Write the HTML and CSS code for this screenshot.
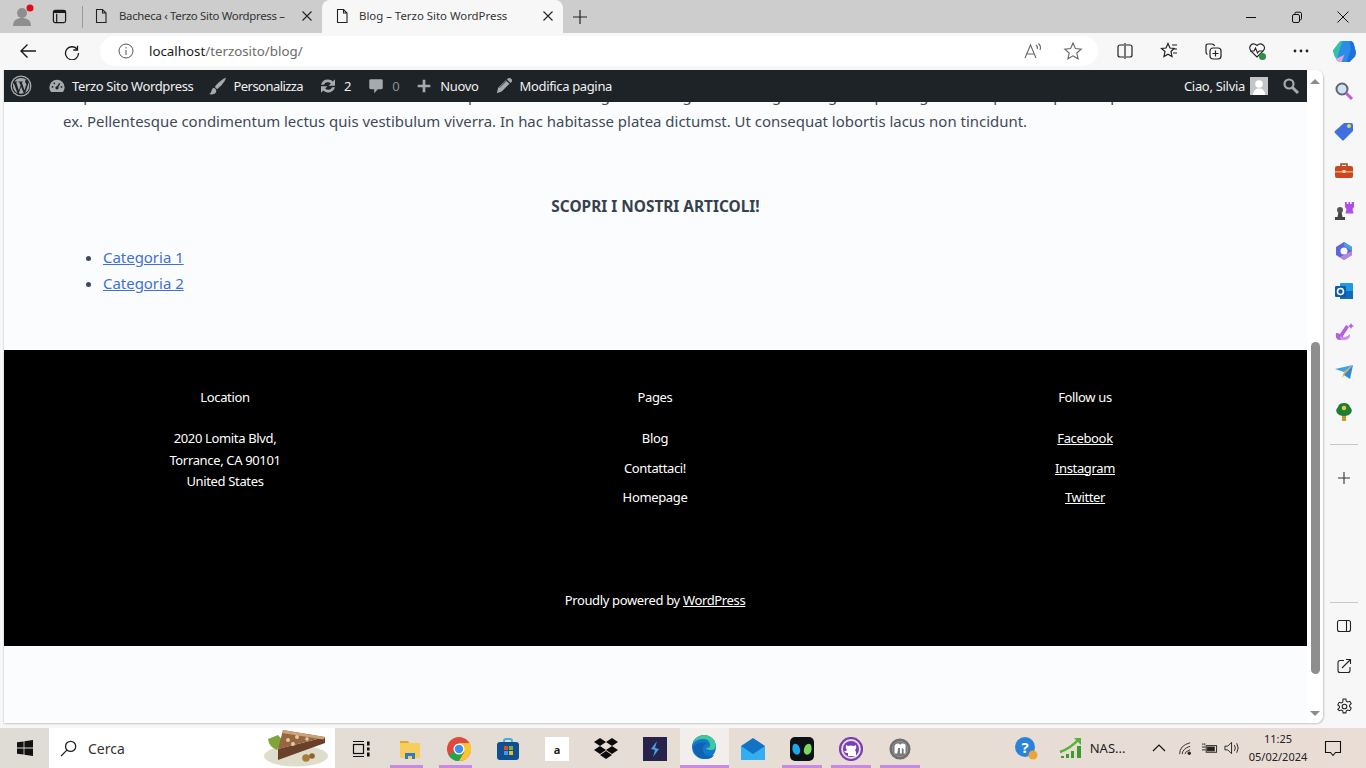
FILE: index.html
```html
<!DOCTYPE html>
<html lang="it">
<head>
  <meta charset="UTF-8">
  <meta name="viewport" content="width=device-width, initial-scale=1.0">
  <title>Blog – Terzo Sito WordPress</title>
  <link rel="stylesheet" href="styles.css">
</head>

<body>
  <div class="window">

    <!-- Tab strip -->
    <header class="tabstrip">
      <div class="profile">
        <svg viewBox="0 0 24 24" width="24" height="24"><circle cx="11" cy="9" r="5" fill="#8e8e8e"/><path d="M2 22c0-6 4-8 9-8s9 2 9 8z" fill="#8e8e8e"/><circle cx="19" cy="4" r="3.5" fill="#e00b1c"/></svg>
      </div>
      <div class="tab-actions">
        <svg viewBox="0 0 16 16" width="15" height="15" fill="none" stroke="#1a1a1a" stroke-width="1.3"><rect x="1.5" y="1.5" width="13" height="13" rx="2"/><path d="M5 5v9.5"/><path d="M1.5 3h13" stroke-width="2.6"/></svg>
      </div>
      <div class="tab-sep"></div>
      <div class="tab">
        <svg class="tab-icon" viewBox="0 0 16 16" width="16" height="16" fill="none" stroke="#222" stroke-width="1.1"><path d="M3.5 1.5h6l3.5 3.5v9.5h-9.5zM9.5 1.5V5H13"/></svg>
        <span class="tab-title">Bacheca ‹ Terzo Sito Wordpress –</span>
        <svg class="tab-close" viewBox="0 0 10 10" width="10" height="10" stroke="#222" stroke-width="1.1"><path d="M.5.5l9 9M9.500.5l-9 9"/></svg>
      </div>
      <div class="tab active">
        <svg class="tab-icon" viewBox="0 0 16 16" width="16" height="16" fill="none" stroke="#222" stroke-width="1.1"><path d="M3.5 1.5h6l3.5 3.5v9.5h-9.5zM9.5 1.5V5H13"/></svg>
        <span class="tab-title">Blog – Terzo Sito WordPress</span>
        <svg class="tab-close" viewBox="0 0 10 10" width="10" height="10" stroke="#222" stroke-width="1.1"><path d="M.5.5l9 9M9.500.5l-9 9"/></svg>
      </div>
      <div class="new-tab">
        <svg viewBox="0 0 16 16" width="16" height="16" stroke="#222" stroke-width="1.2"><path d="M8 1v14M1 8h14"/></svg>
      </div>
      <div class="win-controls">
        <svg viewBox="0 0 12 12" width="12" height="12" stroke="#111" fill="none"><path d="M1 6.5h10"/></svg>
        <svg viewBox="0 0 12 12" width="12" height="12" stroke="#111" fill="none"><rect x="1.5" y="3.5" width="7" height="8" rx="1.5"/><path d="M4 3.5V2.2q0-1 1-1h4q1.5 0 1.5 1.5v5q0 1-1 1H8.500"/></svg>
        <svg viewBox="0 0 12 12" width="12" height="12" stroke="#111" fill="none"><path d="M.5.5l11 11M11.500.5l-11 11"/></svg>
      </div>
    </header>

    <!-- Address bar and browser buttons -->
    <div class="toolbar">
      <button class="tool back"><svg viewBox="0 0 18 18" width="18" height="18" fill="none" stroke="#1a1a1a" stroke-width="1.4"><path d="M17 9H2M8.500 2.500L2 9l6.500 6.500"/></svg></button>
      <button class="tool reload"><svg viewBox="0 0 18 18" width="18" height="18" fill="none" stroke="#1a1a1a" stroke-width="1.3"><path d="M14.500 3.800V8h-4.200"/><path d="M14.300 7.500A6.500 6.500 0 1 0 15.500 11"/></svg></button>
      <div class="address">
        <svg viewBox="0 0 16 16" width="16" height="16" fill="none" stroke="#555"><circle cx="8" cy="8" r="7"/><path d="M8 7v5M8 4v1.500"/></svg>
        <span class="url"><b>localhost</b>/terzosito/blog/</span>
        <span class="address-end">
          <svg viewBox="0 0 20 18" width="20" height="18" fill="none" stroke="#666" stroke-width="1.100"><path d="M2 16L7.500 3 13 16M4 12h7"/><path d="M13 3q2 1.500 1.200 4M15.500 1.500q3 3 1.500 6.500"/></svg>
          <svg viewBox="0 0 20 20" width="20" height="20" fill="none" stroke="#666" stroke-width="1.100"><path d="M10 2l2.400 5.500 5.800.6-4.400 3.900 1.300 5.800L10 14.800 4.900 17.800l1.300-5.800L1.800 8.100l5.800-.6z"/></svg>
        </span>
      </div>
      <div class="tool-group">
        <svg viewBox="0 0 18 18" width="18" height="18" fill="none" stroke="#222" stroke-width="1.200"><path d="M8 3H4a2 2 0 0 0-2 2v8a2 2 0 0 0 2 2h4M10 3h4a2 2 0 0 1 2 2v8a2 2 0 0 1-2 2h-4M9 1v16"/></svg>
        <svg viewBox="0 0 18 18" width="18" height="18" fill="none" stroke="#222" stroke-width="1.200"><path d="M8 1.500l2 4.500 4 .5-3 3 1 5-4-2.300L4 14.500l1-5-3.500-3 4.500-.5zM12 3h5M13.500 7H17M13 11h4"/></svg>
        <svg viewBox="0 0 18 18" width="18" height="18" fill="none" stroke="#222" stroke-width="1.200"><rect x="6" y="6" width="11" height="11" rx="3"/><path d="M11.500 8.500v6M8.500 11.500h6M3.500 12.500Q2 12 2 10V4q0-2 2-2h4q2 0 2.500 2"/></svg>
        <svg viewBox="0 0 18 18" width="18" height="18" fill="none" stroke="#222" stroke-width="1.100"><path d="M9 15L2.800 8.800Q.5 5.500 3 3t6 .5q3-3 6-.5t.2 5.800L9 15"/><path d="M2 9h4l1.500-3 2 5 1.500-2h4"/><circle cx="14.500" cy="14.500" r="3.500" fill="#2f8f46" stroke="none"/></svg>
        <svg viewBox="0 0 18 18" width="18" height="18" fill="#222"><circle cx="3" cy="9" r="1.400"/><circle cx="9" cy="9" r="1.400"/><circle cx="15" cy="9" r="1.400"/></svg>
      </div>
      <div class="copilot">
        <svg viewBox="0 0 24 24" width="25" height="25"><path d="M9 2h8q3 0 4 3l2 8-6 9H8q-3 0-4-3L1 11z" fill="#2a8ee8"/><path d="M1 11l5-7q1-2 4-2l-3 9-2 8q-3-1-4-8z" fill="#35c1a6"/><path d="M17 2q3 0 4 3l2 8q0 4-3 6l-3 3h-3l4-12z" fill="#1f6fe0"/><path d="M8 22q-3 0-4-3l8-4-3 7z" fill="#e6a4e8"/></svg>
      </div>
    </div>

    <div class="browser-body">
      <div class="viewport">
        <div class="page">
          <!-- WordPress admin bar -->
          <nav class="adminbar">
            <div class="ab-left">
              <svg class="ab-wp" viewBox="0 0 20 20" width="22" height="22"><circle cx="10" cy="10" r="9.500" fill="#a7aaad"/><circle cx="10" cy="10" r="8.300" fill="#1d2327"/><path d="M2.700 10c0 2.900 1.700 5.400 4.100 6.600L3.300 7A7.300 7.300 0 0 0 2.700 10zM15 9.600c0-.9-.3-1.500-.6-2-.4-.6-.7-1.100-.7-1.700 0-.7.500-1.300 1.200-1.300h.1A7.300 7.300 0 0 0 4 6h.5c.8 0 1.900-.1 1.900-.1.400 0 .5.600 0 .6 0 0-.4.100-.8.100l2.500 7.500 1.500-4.600-1.100-2.900-.7-.1c-.4 0-.3-.6 0-.6 0 0 1.100.1 1.800.1s1.900-.1 1.900-.1c.4 0 .4.600 0 .6 0 0-.4.100-.8.100l2.500 7.400.7-2.300c.3-.9.500-1.600.5-2.100zM10.100 10.700l-2.100 6a7.300 7.300 0 0 0 4.500-.1zM16.500 6.400c0 .3.100.6.100.9 0 .7-.2 1.600-.6 2.700l-2.200 6.400A7.300 7.300 0 0 0 16.500 6.400z" fill="#a7aaad"/></svg>
              <span class="ab-item first">
                <svg viewBox="0 0 20 20" width="18" height="18" fill="#a7aaad"><path d="M10 3a8.500 8.500 0 0 0-8.500 8.500c0 2 .7 3.900 2 5.300h13c1.300-1.400 2-3.300 2-5.300A8.500 8.500 0 0 0 10 3z"/><path d="M10 12l3-5" stroke="#1d2327" stroke-width="1.600"/><circle cx="10" cy="12" r="1.800" fill="#1d2327"/><circle cx="5" cy="11" r="1" fill="#1d2327"/><circle cx="7" cy="7" r="1" fill="#1d2327"/><circle cx="15" cy="11" r="1" fill="#1d2327"/></svg>
                Terzo Sito Wordpress
              </span>
              <span class="ab-item tight">
                <svg viewBox="0 0 20 20" width="18" height="18" fill="#a7aaad"><path d="M19 .5C15 2 9 7 6.500 11l2.500 2.500C13 10.500 18 5 19 .5zM5.500 12C3 12.500 3 15 2.500 16.500 2 18 1 18.500 0 19c3 1 7 .5 8-2.500.4-1.500-.5-3.500-2.500-4.500z"/></svg>
                Personalizza
              </span>
              <span class="ab-item">
                <svg viewBox="0 0 20 20" width="18" height="18" fill="#a7aaad"><path d="M10.200 2.800c2 0 3.800.8 5.100 2.100L17.800 2.500v7.200h-7.200l2.500-2.500a4.600 4.600 0 0 0-7.600 1.400H2.300a7.900 7.900 0 0 1 7.900-5.800zM2.200 10.300h7.200l-2.500 2.500a4.600 4.600 0 0 0 7.600-1.400h3.200a7.900 7.900 0 0 1-13 3.700L2.200 17.500z"/></svg>
                2
              </span>
              <span class="ab-item dim">
                <svg viewBox="0 0 20 20" width="18" height="18" fill="#a7aaad"><path d="M4 2.500h12q1.500 0 1.500 1.500v8q0 1.500-1.500 1.500h-4l-4 4.500v-4.500H4q-1.500 0-1.500-1.500V4q0-1.500 1.500-1.500z"/></svg>
                0
              </span>
              <span class="ab-item">
                <svg viewBox="0 0 20 20" width="18" height="18" fill="#a7aaad"><path d="M8.500 3h3v5.500H17v3h-5.500V17h-3v-5.500H3v-3h5.500z"/></svg>
                Nuovo
              </span>
              <span class="ab-item">
                <svg viewBox="0 0 20 20" width="18" height="18" fill="#a7aaad"><path d="M14.500 1.500q2-1 3.500.5t.5 3.500l-1.200 1.200-4-4zM12 3.500l4 4L7.500 16 2 18l1.500-6z"/><path d="M5 12l8-8" stroke="#1d2327" stroke-width=".8"/></svg>
                Modifica pagina
              </span>
            </div>
            <div class="ab-right">
              <span class="ab-greet">Ciao, Silvia</span>
              <svg class="ab-avatar" viewBox="0 0 18 18" width="18" height="18"><rect width="18" height="18" fill="#c5c5c5"/><circle cx="9" cy="7" r="3.800" fill="#fff"/><path d="M3 18c0-5 3-6.500 6-6.500s6 1.500 6 6.500z" fill="#fff"/></svg>
              <svg class="ab-search" viewBox="0 0 18 18" width="18" height="18" fill="none" stroke="#a7aaad"><circle cx="7" cy="7" r="4.500" stroke-width="2.200"/><path d="M10.500 10.500L16 16" stroke-width="3"/></svg>
            </div>
          </nav>

          <div class="scroller">
            <main class="content">
              <p class="intro">Ut pharetra sed ante lectus non hendrerit ante in nulla ac pulvinar lorem ut ligula nunc eget tortor augue in eget ac purus gravida et pretium purus a pede. Sed<br>ex. Pellentesque condimentum lectus quis vestibulum viverra. In hac habitasse platea dictumst. Ut consequat lobortis lacus non tincidunt.</p>
              <h2 class="section-title">SCOPRI I NOSTRI ARTICOLI!</h2>
              <ul class="cat-list">
                <li><a href="#">Categoria 1</a></li>
                <li><a href="#">Categoria 2</a></li>
              </ul>
            </main>

            <footer class="site-footer">
              <div class="footer-cols">
                <div class="footer-col">
                  <h3>Location</h3>
                  <address>2020 Lomita Blvd,<br>Torrance, CA 90101<br>United States</address>
                </div>
                <div class="footer-col">
                  <h3>Pages</h3>
                  <ul><li>Blog</li><li>Contattaci!</li><li>Homepage</li></ul>
                </div>
                <div class="footer-col">
                  <h3>Follow us</h3>
                  <ul class="social"><li><a href="#">Facebook</a></li><li><a href="#">Instagram</a></li><li><a href="#">Twitter</a></li></ul>
                </div>
              </div>
              <p class="credit">Proudly powered by <a href="#">WordPress</a></p>
            </footer>
          </div>
        </div>

        <div class="scrollbar">
          <span class="arrow-up"></span>
          <div class="track"><div class="thumb"></div></div>
          <span class="arrow-down"></span>
        </div>
      </div>

      <!-- Edge sidebar -->
      <aside class="sidebar">
        <div class="side-icons">
          <svg viewBox="0 0 20 20" width="20" height="20"><circle cx="8" cy="8" r="5.500" fill="#cfe3f2" stroke="#5c6670" stroke-width="2"/><path d="M12 12l6 6" stroke="#c25bd6" stroke-width="3"/></svg>
          <svg viewBox="0 0 20 20" width="20" height="20"><path d="M10 2h7q2 0 2 2v6L10 19q-1 1-2 0L1 12q-1-1 0-2z" fill="#3f6fe0"/><circle cx="15" cy="5" r="2" fill="#d8e05a"/></svg>
          <svg viewBox="0 0 20 20" width="20" height="20"><path d="M7 5V3h6v2" fill="none" stroke="#a33f1e" stroke-width="1.500"/><rect x="1" y="5" width="18" height="12" rx="2" fill="#c8481f"/><rect x="1" y="10" width="18" height="1.500" fill="#ee9a6d"/><rect x="8.500" y="9" width="3" height="3" fill="#f6d3b8"/></svg>
          <svg viewBox="0 0 20 20" width="20" height="20"><path d="M11 1h1.800v2h1.600V1h1.600v2h1.600V1H20v5l-1.500 2 1 4.500h-8L12.500 8 11 6z" fill="#b14ee8"/><circle cx="6" cy="9" r="3" fill="#565656"/><path d="M4.500 11h3l1 5H3.500zM1 16h10v3H1z" fill="#454545"/></svg>
          <svg viewBox="0 0 20 20" width="20" height="20"><path d="M10 1l8 5v8l-8 5-8-5V6z" fill="#5f67d8"/><path d="M10 1l8 5v4l-8-5z" fill="#4aa1e0"/><path d="M18 10v4l-8 5-4-3z" fill="#b686dd"/><circle cx="10" cy="10" r="3.500" fill="#f7f7f7"/></svg>
          <svg viewBox="0 0 20 20" width="20" height="20"><rect x="6" y="2" width="13" height="16" rx="1" fill="#1e9ae0"/><rect x="6" y="10" width="13" height="8" fill="#0f6cbd"/><rect x="1" y="5" width="11" height="11" rx="1" fill="#0b5cad"/><circle cx="6.500" cy="10.500" r="3" fill="none" stroke="#fff" stroke-width="1.600"/></svg>
          <svg viewBox="0 0 20 20" width="20" height="20"><path d="M2 11q2 0 4 1l6-9 3 2-6 9q0 4-4 4-4-1-3-7z" fill="#b45ee0"/><path d="M6 14q6 3 10-2 1 5-5 6-5 1-5-4z" fill="#d28be8"/><path d="M17 1l1 2 2 1-2 1-1 2-1-2-2-1 2-1z" fill="#b45ee0"/></svg>
          <svg viewBox="0 0 20 20" width="20" height="20"><path d="M1 7l18-4-9 7z" fill="#3ba4e8"/><path d="M19 3L10 10l-2 6z" fill="#e8a93b"/><path d="M19 3l-3 14-6-4z" fill="#2d89d6"/></svg>
          <svg viewBox="0 0 20 20" width="20" height="20"><rect x="8" y="13" width="4" height="6" fill="#c49a2c"/><path d="M10 1q5 0 6 4 3 3 1 6-2 3-7 3t-7-3Q1 8 4 5q1-4 6-4z" fill="#1f7d35"/><circle cx="10" cy="6" r="2.200" fill="#e3cf3c"/></svg>
        </div>
        <div class="side-sep first-sep"></div>
        <div class="side-add">
          <svg viewBox="0 0 14 14" width="14" height="14" stroke="#333" stroke-width="1.100"><path d="M7 1v12M1 7h12"/></svg>
        </div>
        <div class="side-bottom">
          <div class="side-sep bottom-sep"></div>
          <svg viewBox="0 0 16 16" width="16" height="16" fill="none" stroke="#222" stroke-width="1.100"><rect x="1.500" y="2.500" width="13" height="11" rx="2"/><path d="M10.500 2.500v11"/></svg>
          <svg viewBox="0 0 16 16" width="16" height="16" fill="none" stroke="#222" stroke-width="1.100"><path d="M8 2.500H4a2 2 0 0 0-2 2v8a2 2 0 0 0 2 2h8a2 2 0 0 0 2-2V9M6 10L14.500 1.500M10 1.500h4.500V6"/></svg>
          <svg viewBox="0 0 16 16" width="17" height="17" fill="none" stroke="#222" stroke-width="1"><circle cx="8" cy="8" r="2.200"/><path d="M6.700 1h2.600l.4 2 1.300.7 2-.6 1.300 2.300-1.500 1.400v1.400l1.500 1.400-1.300 2.300-2-.6-1.300.7-.4 2H6.700l-.4-2-1.300-.7-2 .6L1.700 10.600l1.500-1.400V7.800L1.700 6.400 3 4.100l2 .6 1.300-.7z"/></svg>
        </div>
      </aside>
    </div>

    <!-- Windows taskbar -->
    <footer class="taskbar">
      <div class="start">
        <svg viewBox="0 0 16 16" width="16" height="16" fill="#111"><path d="M0 2.300L6.600 1.400V7.500H0zM7.400 1.300L16 0V7.500H7.400zM0 8.400H6.600V14.600L0 13.700zM7.400 8.400H16V16L7.400 14.800z"/></svg>
      </div>
      <div class="search-box">
        <svg viewBox="0 0 16 16" width="17" height="17" fill="none" stroke="#222" stroke-width="1.200"><circle cx="10" cy="6" r="4.800"/><path d="M6.500 9.500L1 15"/></svg>
        <span>Cerca</span>
        <svg class="pie" viewBox="0 0 64 37" width="64" height="37"><ellipse cx="32" cy="26" rx="32" ry="10.500" fill="#dedccb"/><path d="M4 9l10-4 5 6-6 9q-8-3-9-11z" fill="#7da53a"/><path d="M14 19l47-12v6L14 30z" fill="#6b3f28"/><path d="M19 0l42 7-47 12z" fill="#96663f"/><path d="M19 0l42 7-1.500 2.500L18 3z" fill="#c9a27a"/><circle cx="24" cy="10" r="2" fill="#e3c8a6"/><circle cx="33" cy="7" r="2" fill="#e3c8a6"/><circle cx="43" cy="9" r="1.800" fill="#e3c8a6"/><circle cx="29" cy="14" r="2" fill="#e3c8a6"/><circle cx="42" cy="28" r="3.800" fill="#a87a3c"/><circle cx="48" cy="26" r="2.800" fill="#8c6230"/></svg>
      </div>
      <div class="task-icons">
        <span class="task"><svg viewBox="0 0 18 18" width="18" height="18" fill="none" stroke="#111" stroke-width="1.200"><path d="M1 1.500h11M1 16.500h11"/><rect x="1.500" y="4.500" width="10" height="9"/><path d="M15 2h2v3h-2M15 8h2v2h-2M15 13h2v3h-2" fill="#111"/></svg></span>
        <span class="task open short"><svg viewBox="0 0 22 22" width="22" height="22"><path d="M1 3h8l2 3H1z" fill="#e4a72b"/><rect x="1" y="5" width="20" height="15" rx="1" fill="#f7cd5c"/><rect x="6" y="15" width="10" height="6" fill="#2a7bc8"/><rect x="9" y="18" width="4" height="3" fill="#f7cd5c"/></svg></span>
        <span class="task open short"><svg viewBox="0 0 24 24" width="24" height="24"><circle cx="12" cy="12" r="12" fill="#de4a3b"/><path d="M12 12L1.600 18A12 12 0 0 0 12 24l5-9z" fill="#2aa24d"/><path d="M12 6h10.500A12 12 0 0 1 12 24l5.200-9z" fill="#fbc52d"/><circle cx="12" cy="12" r="5.500" fill="#fff"/><circle cx="12" cy="12" r="4.200" fill="#3f8ef0"/></svg></span>
        <span class="task"><svg viewBox="0 0 24 24" width="24" height="24"><path d="M8 7V4q0-2 2-2h4q2 0 2 2v3" fill="none" stroke="#3fb0e0" stroke-width="2"/><rect x="1" y="5" width="22" height="18" rx="3" fill="#10508f"/><rect x="8" y="9" width="4" height="4" fill="#e8442e"/><rect x="13" y="9" width="4" height="4" fill="#6fb53a"/><rect x="8" y="14" width="4" height="4" fill="#2fa1e8"/><rect x="13" y="14" width="4" height="4" fill="#f4b81f"/></svg></span>
        <span class="task"><span class="amazon">a</span></span>
        <span class="task"><svg viewBox="0 0 24 22" width="24" height="22" fill="#0b0b0b"><path d="M6 0l6 4-6 4-6-4zM18 0l6 4-6 4-6-4zM0 12l6-4 6 4-6 4zM12 12l6-4 6 4-6 4zM6 17l6-4 6 4-6 4z"/></svg></span>
        <span class="task"><svg viewBox="0 0 24 24" width="24" height="24"><rect width="24" height="24" fill="#26244a"/><path d="M14 4l-6 8 4 1-2 7 6-8-4-1z" fill="#4c9fe6"/></svg></span>
        <span class="task active"><svg viewBox="0 0 24 24" width="24" height="24"><circle cx="12" cy="12" r="12" fill="#1478c8"/><path d="M1 9Q3 1 12 0q9 0 12 10 0 5-5 5-4 0-5-2 5 0 4-4-1-5-7-5-7 0-10 5z" fill="#3cc9a0"/><path d="M1 12q1 11 13 12 6 0 8-4-9 3-11-4-1-6 4-8-10-2-14 4z" fill="#0f62b5"/></svg></span>
        <span class="task"><svg viewBox="0 0 24 22" width="24" height="22"><path d="M0 8L12 0l12 8v14H0z" fill="#1472c4"/><path d="M0 8l12 8 12-8v14H0z" fill="#33aef0"/></svg></span>
        <span class="task open"><svg viewBox="0 0 24 24" width="24" height="24"><rect width="24" height="24" rx="5" fill="#0c1116"/><path d="M3 8c3-3 6 0 7 4s-2 7-5 5-3-6-2-9z" fill="#1ea7e8"/><path d="M21 8c-3-3-6 0-7 4s2 7 5 5 3-6 2-9z" fill="#7bd957"/></svg></span>
        <span class="task open"><svg viewBox="0 0 24 24" width="24" height="24"><circle cx="12" cy="12" r="11" fill="none" stroke="#7b3fb5" stroke-width="2.200"/><circle cx="12" cy="12" r="8" fill="#7b3fb5"/><path d="M9 19v-3q-3 .5-4-2 2 .5 3-1-2-2-1-5l2 1q2-1 6 0l2-1q1 3-1 5 1 1 1 3v3z" fill="#fff"/></svg></span>
        <span class="task open"><svg viewBox="0 0 24 24" width="22" height="22"><circle cx="12" cy="12" r="10" fill="none" stroke="#6f6f6f" stroke-width="3"/><circle cx="12" cy="12" r="8.500" fill="#7a7a7a"/><path d="M6 17V10q0-4 4-4 2 0 2 2 0-2 3-2 4 0 3 4v7h-2v-5l-2-1v6h-2v-6h-2l-1 6z" fill="#fff"/></svg></span>
      </div>
      <div class="tray">
        <svg class="tray-help" viewBox="0 0 24 24" width="24" height="24"><circle cx="11" cy="11" r="10" fill="#2a83d8"/><text x="11" y="17" text-anchor="middle" class="help-mark">?</text><circle cx="19" cy="19" r="4.500" fill="#eca43a"/></svg>
        <svg class="tray-chart" viewBox="0 0 24 24" width="24" height="24"><rect x="2" y="20" width="3" height="2" fill="#3d9a2e"/><rect x="7" y="18" width="3" height="4" fill="#3d9a2e"/><rect x="12" y="15" width="3" height="7" fill="#3d9a2e"/><rect x="18" y="10" width="4" height="12" fill="#3d9a2e"/><path d="M1 16Q12 12 20 3" fill="none" stroke="#58b233" stroke-width="2.500"/><path d="M15 2h7v7z" fill="#58b233"/></svg>
        <span class="tray-label">NAS...</span>
        <svg class="tray-up" viewBox="0 0 14 8" width="14" height="8" fill="none" stroke="#111" stroke-width="1.200"><path d="M1 7l6-6 6 6"/></svg>
        <svg class="tray-wifi" viewBox="0 0 16 16" width="14" height="14" fill="none" stroke="#222"><path d="M3 15Q3 5 15 2M6 15Q6 9 15 6M9 15q0-3 6-5"/><circle cx="14" cy="14" r="1.500" fill="#222"/></svg>
        <svg class="tray-batt" viewBox="0 0 18 12" width="17" height="12" fill="none" stroke="#222"><rect x="5.500" y="3.500" width="11" height="7"/><rect x="7" y="5" width="7" height="4" fill="#222"/><path d="M1 5h4M1 8h4M2 1v2M4 1v2"/></svg>
        <svg class="tray-vol" viewBox="0 0 18 14" width="17" height="14" fill="none" stroke="#222"><path d="M1 5h3l4-4v12l-4-4H1zM11 4q2 3 0 6M13.500 2q3 5 0 10"/></svg>
        <div class="clock"><span>11:25</span><span>05/02/2024</span></div>
        <svg class="tray-notif" viewBox="0 0 18 18" width="18" height="18" fill="none" stroke="#111" stroke-width="1.100"><path d="M1.500 2.500h15v11h-5l-2.500 3-2.500-3h-5z"/></svg>
      </div>
    </footer>
  </div>
</body>
</html>
```

FILE: styles.css
```css
/* Base */
html, body {
  margin: 0;
  height: 100%;
  overflow: hidden;
}

body {
  font-family: "Noto Sans", "Open Sans", sans-serif;
  color: #1a1a1a;
}

svg {
  display: block;
  flex: none;
}

.window {
  width: 1366px;
  height: 768px;
  display: flex;
  flex-direction: column;
  background: #f7f7f7;
}

/* Tab strip */
.tabstrip {
  height: 33px;
  display: flex;
  align-items: flex-end;
  background: #cdcdcd;
}

.profile {
  width: 42px;
  height: 29px;
  padding-left: 11px;
  box-sizing: border-box;
}

.tab-actions {
  width: 32px;
  height: 28px;
  padding-left: 10px;
  box-sizing: border-box;
  padding-top: 4px;
}

.tab-sep {
  width: 1px;
  height: 22px;
  margin: 0 3px 5px 8px;
  background: #9a9a9a;
}

.tab {
  width: 236px;
  height: 33px;
  display: flex;
  align-items: center;
  padding: 0 10px 2px 7px;
  box-sizing: border-box;
  font-size: 11.4px;
  letter-spacing: -0.3px;
  color: #333;
}

.tab.active {
  width: 241px;
  padding-left: 12px;
  letter-spacing: 0;
  background: #f7f7f7;
  border-radius: 8px 8px 0 0;
}

.tab-icon {
  margin-right: 10px;
}

.tab.active .tab-icon {
  margin-right: 9px;
}

.tab-title {
  flex: 1;
  white-space: nowrap;
  overflow: hidden;
}

.new-tab {
  height: 33px;
  display: flex;
  align-items: center;
  margin-left: 9px;
}

.win-controls {
  margin-left: auto;
  height: 33px;
  display: flex;
  align-items: center;
  gap: 34px;
  padding-right: 17px;
}

/* Toolbar */
.toolbar {
  height: 37px;
  display: flex;
  align-items: center;
  padding-bottom: 1px;
  box-sizing: border-box;
}

.tool {
  all: unset;
  width: 44px;
  display: flex;
  justify-content: center;
}

.back {
  margin-left: 6px;
}

.address {
  width: 998px;
  height: 30px;
  margin-left: 6px;
  padding-left: 18px;
  box-sizing: border-box;
  display: flex;
  align-items: center;
  background: #fff;
  border-radius: 15px;
}

.url {
  margin-left: 15px;
  font-size: 13.3px;
  color: #6c6c6c;
}

.url b {
  font-weight: 400;
  color: #1a1a1a;
}

.address-end {
  margin-left: auto;
  display: flex;
  align-items: center;
  gap: 20px;
  padding-right: 15px;
}

.tool-group {
  display: flex;
  gap: 26px;
  margin-left: 18px;
}

.copilot {
  margin-left: 22px;
}

/* Browser viewport */
.browser-body {
  height: 658px;
  display: flex;
  padding: 0 0 5px 3px;
  box-sizing: border-box;
}

.viewport {
  flex: 1;
  display: flex;
  background: #fff;
  border-left: 1px solid #e2e2e2;
  border-radius: 0 8px 8px 0;
  box-shadow: 1px 1px 2px rgba(0, 0, 0, 0.2);
  overflow: hidden;
}

.page {
  flex: 1;
  display: flex;
  flex-direction: column;
  min-width: 0;
  background: #fbfcfe;
}

.adminbar {
  height: 32px;
  flex: none;
  display: flex;
  justify-content: space-between;
  align-items: center;
  background: #1d2327;
  color: #f0f0f1;
  font-size: 13px;
  letter-spacing: -0.35px;
}

.ab-left,
.ab-right,
.ab-item {
  display: flex;
  align-items: center;
}

.ab-wp {
  margin-left: 6px;
}

.ab-item {
  gap: 7px;
  margin-left: 16px;
}

.ab-item.first {
  gap: 6px;
}

.ab-item.tight {
  margin-left: 15px;
  letter-spacing: -0.55px;
}

.ab-item.dim {
  color: #8c8f94;
}

.ab-greet {
  margin-right: 5px;
  letter-spacing: -0.3px;
}

.ab-search {
  margin: 0 7px 0 14px;
}

.scroller {
  flex: 1;
  overflow: hidden;
}

.content {
  padding: 0 59px;
  font-size: 14.94px;
  line-height: 26px;
  color: #3f4a57;
}

/* first line is scrolled away under the admin bar */
.intro {
  margin: -20px 0 0;
  height: 52px;
  white-space: nowrap;
}

.section-title {
  margin: 60px 0 0;
  font-size: 15.4px;
  font-weight: 700;
  line-height: 26px;
  text-align: center;
  color: #36414e;
}

.cat-list {
  margin: 24px 0 54px;
  padding-left: 40px;
}

.cat-list a {
  color: #3f6fd8;
}

/* Footer */
.site-footer {
  height: 296px;
  padding: 36px 7px 0 6px;
  box-sizing: border-box;
  background: #000;
  color: #fff;
  font-size: 13px;
  letter-spacing: -0.35px;
  line-height: 22px;
  text-align: center;
}

.site-footer a {
  color: #fff;
}

.footer-cols {
  display: grid;
  grid-template-columns: repeat(3, 1fr);
}

.footer-col h3 {
  margin: 0 0 19px;
  font-size: 13px;
  font-weight: 400;
}

.footer-col address {
  padding-top: 1px;
  font-style: normal;
  line-height: 21.5px;
}

.footer-col ul {
  margin: 0;
  padding: 0;
  list-style: none;
}

.footer-col li {
  margin-bottom: 7.500px;
}

.credit {
  margin: 73px 0 0;
}

/* Scrollbar */
.scrollbar {
  width: 16px;
  display: flex;
  flex-direction: column;
  align-items: center;
  background: #fff;
}

.arrow-up,
.arrow-down {
  width: 0;
  height: 0;
  border-left: 5px solid transparent;
  border-right: 5px solid transparent;
}

.arrow-up {
  margin-top: 9px;
  border-bottom: 5px solid #8c8c8c;
}

.arrow-down {
  margin-bottom: 7px;
  border-top: 5px solid #8c8c8c;
}

.track {
  flex: 1;
  width: 9px;
  padding-top: 258px;
  box-sizing: border-box;
}

.thumb {
  height: 332px;
  background: #8e8e8e;
  border-radius: 5px;
}

/* Edge sidebar */
.sidebar {
  width: 43px;
  flex: none;
  padding-right: 1px;
  box-sizing: border-box;
  display: flex;
  flex-direction: column;
  align-items: center;
}

.side-icons {
  display: flex;
  flex-direction: column;
  align-items: center;
  gap: 20.1px;
  padding-top: 11px;
}

.side-sep {
  width: 28px;
  height: 1px;
  background: #c8c8c8;
}

.first-sep {
  margin-top: 22px;
}

.side-add {
  margin-top: 26px;
}

.side-bottom {
  margin-top: auto;
  display: flex;
  flex-direction: column;
  align-items: center;
  gap: 24px;
  padding-bottom: 8px;
}

.bottom-sep {
  margin-bottom: -9px;
}

/* Taskbar */
.taskbar {
  height: 40px;
  display: flex;
  background: linear-gradient(90deg, #dedcd5, #e6ddd5 50%, #e9ddd6);
}

.start {
  width: 49px;
  display: flex;
  align-items: center;
  justify-content: center;
}

.search-box {
  width: 286px;
  display: flex;
  align-items: center;
  padding: 0 7px 0 11px;
  box-sizing: border-box;
  background: #fff;
  font-size: 14px;
  color: #333;
}

.search-box span {
  margin-left: 11px;
}

.pie {
  margin-left: auto;
}

.task-icons {
  display: flex;
  margin-left: 1.5px;
}

.task {
  width: 49px;
  display: flex;
  align-items: center;
  justify-content: center;
  padding-top: 2px;
  box-sizing: border-box;
}

.task.open {
  background: linear-gradient(#c98ae2, #c98ae2) center bottom / 40px 3px no-repeat;
}

.task.open.short {
  background-position: 4px bottom;
  background-size: 33px 3px;
}

.task.active {
  background: #f1eeec;
  border-bottom: 3px solid #c98ae2;
  padding-top: 0;
}

.amazon {
  width: 24px;
  height: 24px;
  display: flex;
  align-items: center;
  justify-content: center;
  background: #fff;
  font-size: 11px;
  font-weight: 700;
  color: #222;
}

.tray {
  margin-left: auto;
  display: flex;
  align-items: center;
}

.help-mark {
  font-size: 15px;
  font-weight: 700;
  fill: #fff;
}

.tray-chart {
  margin-left: 21px;
}

.tray-label {
  margin-left: 7px;
  font-size: 13px;
  color: #222;
}

.tray-up {
  margin-left: 26px;
}

.tray-wifi {
  margin-left: 11px;
}

.tray-batt {
  margin-left: 10px;
}

.tray-vol {
  margin-left: 6px;
}

.clock {
  width: 60px;
  margin-left: 7.500px;
  display: flex;
  flex-direction: column;
  align-items: center;
  font-size: 11px;
  line-height: 18px;
  color: #222;
  white-space: nowrap;
}

.tray-notif {
  margin: 0 24px 0 16px;
}
```
